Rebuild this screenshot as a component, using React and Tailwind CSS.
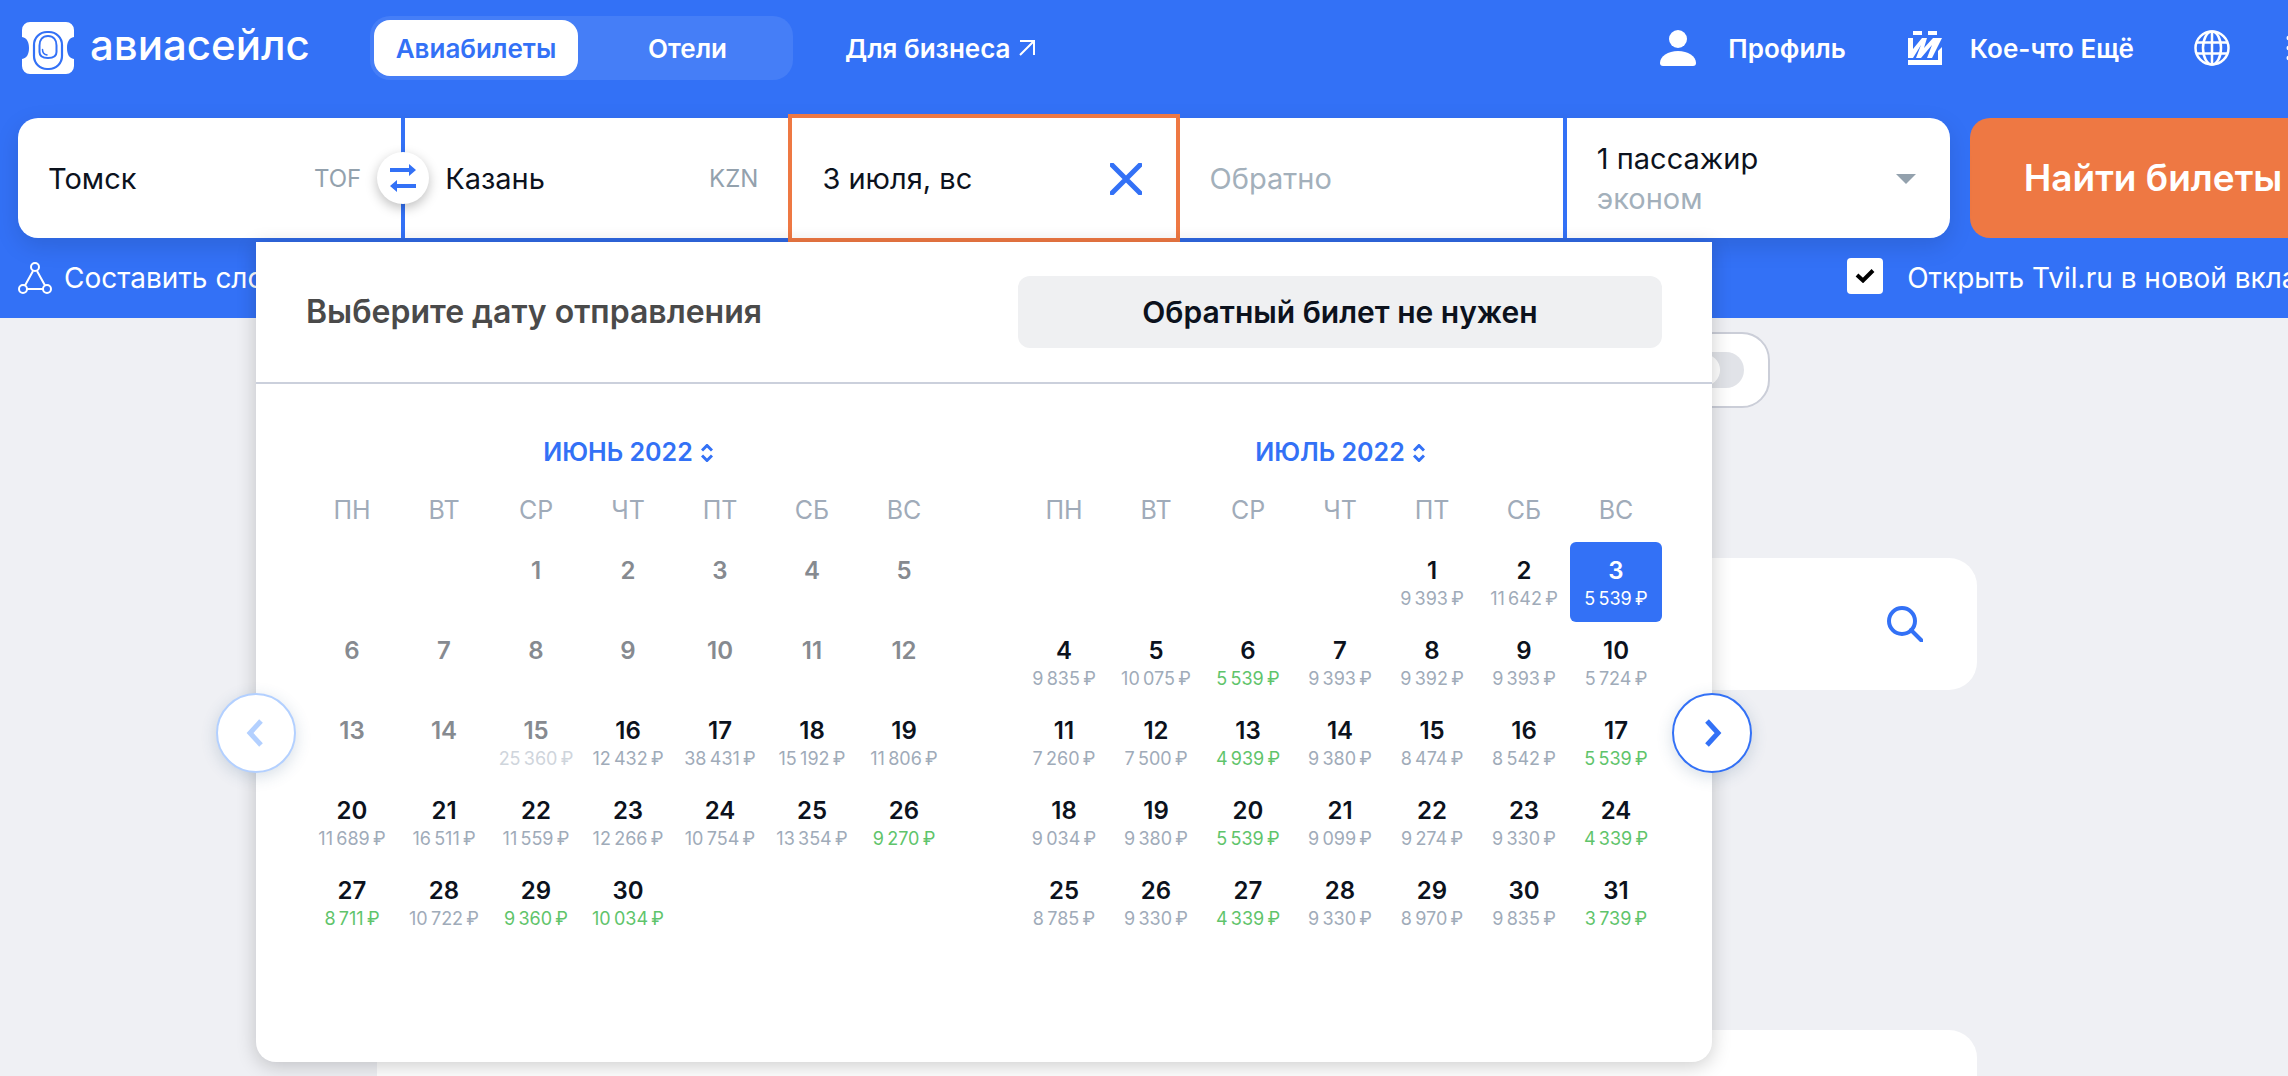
import { useState } from 'react';
import clsx from 'clsx';

const weekdays = ['ПН', 'ВТ', 'СР', 'ЧТ', 'ПТ', 'СБ', 'ВС'];

// offset - how many cells are empty before the 1st
const june = {
  title: 'ИЮНЬ 2022',
  offset: 2,
  days: 30,
  pastUntil: 15,
  prices: {
    15: 25360, 16: 12432, 17: 38431, 18: 15192, 19: 11806,
    20: 11689, 21: 16511, 22: 11559, 23: 12266, 24: 10754, 25: 13354, 26: 9270,
    27: 8711, 28: 10722, 29: 9360, 30: 10034
  },
  cheap: [26, 27, 29, 30]
};

const july = {
  title: 'ИЮЛЬ 2022',
  offset: 4,
  days: 31,
  pastUntil: 0,
  prices: {
    1: 9393, 2: 11642, 3: 5539,
    4: 9835, 5: 10075, 6: 5539, 7: 9393, 8: 9392, 9: 9393, 10: 5724,
    11: 7260, 12: 7500, 13: 4939, 14: 9380, 15: 8474, 16: 8542, 17: 5539,
    18: 9034, 19: 9380, 20: 5539, 21: 9099, 22: 9274, 23: 9330, 24: 4339,
    25: 8785, 26: 9330, 27: 4339, 28: 9330, 29: 8970, 30: 9835, 31: 3739
  },
  cheap: [6, 13, 17, 20, 24, 27, 31]
};

function formatPrice(value) {
  const thousands = Math.floor(value / 1000);
  const rest = String(value % 1000).padStart(3, '0');
  return `${thousands}\u2009${rest}\u2009₽`;
}

function getWeeks({ offset, days }) {
  const cells = [...Array(offset).fill(null), ...Array.from({ length: days }, (_, i) => i + 1)];
  while (cells.length % 7) cells.push(null);
  const weeks = [];
  for (let i = 0; i < cells.length; i += 7) weeks.push(cells.slice(i, i + 7));
  return weeks;
}

function Logo() {
  return (
    <svg className="w-[52px] h-[52px]" viewBox="0 0 52 52" fill="none">
      <path
        d="M8 0h36a8 8 0 0 1 8 8v7c-5 1-7 5-7 11s2 10 7 11v7a8 8 0 0 1-8 8H8a8 8 0 0 1-8-8v-7c5-1 7-5 7-11s-2-10-7-11V8a8 8 0 0 1 8-8Z"
        fill="#fff"
      />
      <rect x="12" y="10" width="28" height="37" rx="13" stroke="#3371f6" strokeWidth="2.200" />
      <path
        d="M26 14c5.500 0 8.500 4 8.500 9.500V30c0 4-2.500 6-8.500 6s-8.500-2-8.500-6v-6.500c0-5.500 3-9.500 8.500-9.500Z"
        stroke="#3371f6"
        strokeWidth="2"
      />
      <path d="M20.500 27.500c0 3 1.500 5 4.500 5.500" stroke="#3371f6" strokeWidth="1.500" strokeLinecap="round" />
    </svg>
  );
}

function MonthCalendar({ month, selected, onSelect }) {
  return (
    <div className="w-[644px]">
      <button className="mx-auto flex items-center gap-2 h-[58px] text-[25px] font-semibold text-[#3371f6]">
        {month.title}
        <svg className="w-3 h-[18px]" viewBox="0 0 12 18" fill="none" stroke="currentColor" strokeWidth="3">
          <path d="m1 6.500 5-5 5 5M1 11.500l5 5 5-5" />
        </svg>
      </button>
      <table className="w-full table-fixed border-collapse">
        <thead>
          <tr className="h-[58px]">
            {weekdays.map((day) => (
              <th key={day} className="p-0 align-middle text-[25px] font-normal text-[#a0abb9]">{day}</th>
            ))}
          </tr>
          <tr aria-hidden="true"><td className="h-[2px] p-0" colSpan={7} /></tr>
        </thead>
        <tbody>
          {getWeeks(month).map((week, i) => (
            <tr key={i} className="h-20">
              {week.map((day, j) => (
                <td key={j} className="p-0">
                  {day && (
                    <button
                      disabled={day <= month.pastUntil}
                      onClick={() => onSelect(day)}
                      className={clsx(
                        'flex flex-col items-center w-full h-20 pt-[14px] rounded-md whitespace-nowrap',
                        selected === day && 'bg-[#3371f6] text-white',
                        selected !== day && (day <= month.pastUntil ? 'text-[#868a90]' : 'text-[#0c121d]')
                      )}
                    >
                      <span className="text-[24px] leading-[30px] font-semibold">{day}</span>
                      {month.prices[day] && (
                        <span
                          className={clsx(
                            'text-[18px] leading-[26px]',
                            selected === day && 'text-white',
                            selected !== day && day <= month.pastUntil && 'text-[#cfd5dc]',
                            selected !== day && day > month.pastUntil &&
                              (month.cheap.includes(day) ? 'text-[#5fc46b]' : 'text-[#a0abb9]')
                          )}
                        >
                          {formatPrice(month.prices[day])}
                        </span>
                      )}
                    </button>
                  )}
                </td>
              ))}
            </tr>
          ))}
        </tbody>
      </table>
    </div>
  );
}

function DatePicker({ selected, onSelect }) {
  return (
    <div className="absolute top-[124px] left-1/2 -translate-x-1/2 z-20 w-[1456px] bg-white rounded-b-[20px] shadow-[0_4px_20px_rgba(0,0,0,0.2)]">
      <div className="flex items-center justify-between h-[142px] px-[50px] border-b-2 border-[#cbd0dc]">
        <h2 className="text-[32px] font-semibold text-[#4a4a4a]">Выберите дату отправления</h2>
        <button className="w-[644px] h-[72px] rounded-xl bg-[#eff0f2] text-[30px] font-semibold text-[#0c121d]">
          Обратный билет не нужен
        </button>
      </div>
      <div className="flex justify-between px-[50px] pt-10 pb-[120px]">
        <MonthCalendar month={june} />
        <MonthCalendar month={july} selected={selected} onSelect={onSelect} />
      </div>
      <button
        disabled
        aria-label="Предыдущий месяц"
        className="absolute top-[451px] -left-10 flex items-center justify-center w-20 h-20 rounded-full border-2 border-[#b3d0ff] bg-white text-[#b3d0ff] shadow-[0_4px_16px_rgba(50,90,130,0.2)]"
      >
        <svg className="w-5 h-7" viewBox="0 0 20 28" fill="none" stroke="currentColor" strokeWidth="5">
          <path d="M15 2 4 14l11 12" />
        </svg>
      </button>
      <button
        aria-label="Следующий месяц"
        className="absolute top-[451px] -right-10 flex items-center justify-center w-20 h-20 rounded-full border-2 border-[#3371f6] bg-white text-[#3371f6] shadow-[0_4px_16px_rgba(50,90,130,0.2)]"
      >
        <svg className="w-5 h-7" viewBox="0 0 20 28" fill="none" stroke="currentColor" strokeWidth="5">
          <path d="m5 2 11 12L5 26" />
        </svg>
      </button>
    </div>
  );
}

function Header() {
  return (
    <header className="flex items-center h-24 pl-[22px] pr-8 text-[26px] font-semibold">
      <a href="#" className="flex items-center gap-4">
        <Logo />
        <span className="w-[216px] pb-[6px] text-[42px] leading-[52px] font-medium">авиасейлс</span>
      </a>
      <nav className="flex items-center ml-16">
        <div className="flex gap-2 w-[423px] h-16 p-1 rounded-[20px] bg-[#457ef7]">
          <a href="#" className="flex items-center justify-center w-[204px] rounded-2xl bg-white text-[#3371f6]">Авиабилеты</a>
          <a href="#" className="flex items-center justify-center flex-1">Отели</a>
        </div>
        <a href="#" className="flex items-center gap-2 ml-[52px] whitespace-nowrap">
          Для бизнеса
          <svg className="w-4 h-4" viewBox="0 0 16 16" fill="none" stroke="#fff" strokeWidth="2">
            <path d="M1 1h14v14M15 1 1 15" />
          </svg>
        </a>
      </nav>
      <div className="flex items-center ml-auto whitespace-nowrap">
        <a href="#" className="flex items-center gap-8">
          <svg className="w-9 h-9" viewBox="0 0 36 36" fill="#fff">
            <circle cx="18" cy="9" r="9" />
            <path d="M0 33c0-7 8-12 18-12s18 5 18 12c0 2-1 3-3 3H3c-2 0-3-1-3-3Z" />
          </svg>
          Профиль
        </a>
        <a href="#" className="flex items-center gap-7 ml-[62px]">
          <svg className="w-[34px] h-[34px]" viewBox="0 0 34 34" fill="#fff">
            <path d="M5 0h9v4H5zM20 0h9v4h-9zM0 29h30V20l4-4v18H0z" />
            <path d="M0 7h5v11L14 7h5l-3 10 9-10h9L24 27h-5l5-13-11 13H8l5-13L5 27H0z" />
          </svg>
          Кое-что Ещё
        </a>
        <button aria-label="Язык" className="ml-15">
          <svg className="w-9 h-9" viewBox="0 0 36 36" fill="none" stroke="#fff" strokeWidth="2.500">
            <circle cx="18" cy="18" r="16.500" />
            <ellipse cx="18" cy="18" rx="9" ry="16.500" />
            <path d="M18 1v34M3 12.500h30M3 23.500h30" />
          </svg>
        </button>
        <button aria-label="Меню" className="ml-14">
          <svg className="w-9 h-9" viewBox="0 0 36 36" stroke="#fff" strokeWidth="5" strokeLinecap="round">
            <path d="M3 8h30M3 18h30M3 28h30" />
          </svg>
        </button>
      </div>
    </header>
  );
}

function SearchForm({ selected, onSelect }) {
  const [newTab, setNewTab] = useState(true);

  return (
    <form onSubmit={(e) => e.preventDefault()} className="pt-[22px]">
      <div className="flex gap-5 px-[18px]">
        <div className="relative flex-1 grid grid-cols-5 gap-1 h-[120px] rounded-[20px] text-[29px] text-[#0c121d] shadow-[0_8px_24px_rgba(0,0,0,0.12)]">
          <label className="flex items-center pl-[30px] pr-10 pt-[2px] bg-white rounded-l-[20px]">
            <input aria-label="Откуда" defaultValue="Томск" className="flex-1 min-w-0 outline-none" />
            <span className="text-[24px] text-[#93a1ad]">TOF</span>
          </label>
          <label className="relative flex items-center pl-10 pr-[30px] pt-[2px] bg-white">
            <input aria-label="Куда" defaultValue="Казань" className="flex-1 min-w-0 outline-none" />
            <span className="text-[24px] text-[#93a1ad]">KZN</span>
            <button
              type="button"
              aria-label="Поменять местами"
              className="absolute -left-7 top-[34px] flex items-center justify-center w-[52px] h-[52px] rounded-full bg-white shadow-[0_4px_12px_rgba(0,0,0,0.25)]"
            >
              <svg className="w-7 h-7" viewBox="0 0 28 28" fill="#3371f6">
                <path d="M1 4h19V0l7 6-7 6V8H1zM27 20H8v-4l-7 6 7 6v-4h19z" />
              </svg>
            </button>
          </label>
          <label className="z-10 flex items-center pl-[30px] pr-[34px] pt-[2px] bg-white ring-4 ring-[#ee7843]">
            <input aria-label="Туда" readOnly value={`${selected} июля, вс`} className="flex-1 min-w-0 outline-none" />
            <button type="button" aria-label="Очистить">
              <svg className="w-8 h-8" viewBox="0 0 32 32" fill="none" stroke="#3371f6" strokeWidth="5" strokeLinecap="round">
                <path d="m2 2 28 28M30 2 2 30" />
              </svg>
            </button>
          </label>
          <label className="flex items-center px-[30px] pt-[2px] bg-white">
            <input aria-label="Обратно" placeholder="Обратно" className="w-full outline-none placeholder:text-[#a3b0bb]" />
          </label>
          <button type="button" className="flex items-center justify-between pl-[30px] pr-[34px] pt-[2px] bg-white rounded-r-[20px] text-left">
            <span className="leading-10">
              <span className="block">1 пассажир</span>
              <span className="block text-[#a3b0bb]">эконом</span>
            </span>
            <svg className="w-5 h-[10px]" viewBox="0 0 20 10" fill="#93a1ad">
              <path d="M0 0h20L10 10z" />
            </svg>
          </button>
          <DatePicker selected={selected} onSelect={onSelect} />
        </div>
        <button type="submit" className="w-[366px] rounded-[20px] bg-[#ee7843] text-[37px] font-semibold">
          Найти билеты
        </button>
      </div>
      <div className="flex items-center justify-between h-20 pl-[18px] pr-2 text-[28px] whitespace-nowrap">
        <a href="#" className="flex items-center gap-3">
          <svg className="w-[34px] h-8" viewBox="0 0 34 32" fill="none" stroke="#fff" strokeWidth="2">
            <circle cx="17" cy="5" r="4" />
            <circle cx="5" cy="27" r="4" />
            <circle cx="29" cy="27" r="4" />
            <path d="M15 9 7 23.500M19 9l8 14.500M9 27h16" />
          </svg>
          Составить сложный маршрут
        </a>
        <label className="flex items-center gap-6">
          <span className="relative flex items-center justify-center w-9 h-9 -mt-1">
            <input
              type="checkbox"
              checked={newTab}
              onChange={(e) => setNewTab(e.target.checked)}
              className="w-9 h-9 appearance-none rounded-sm bg-white"
            />
            {newTab && (
              <svg className="absolute w-5 h-[14px] pointer-events-none" viewBox="0 0 20 14" fill="none" stroke="#000" strokeWidth="4">
                <path d="m2 6 6 5.500L18 1.500" />
              </svg>
            )}
          </span>
          Открыть Tvil.ru в новой вкладке
        </label>
      </div>
    </form>
  );
}

export default function App() {
  const [selected, setSelected] = useState(3);

  return (
    <div className="overflow-hidden h-screen bg-[#eff0f4] font-['Inter',sans-serif]">
      <div className="flex flex-col w-[calc(100%+66px)] h-full">
        <div className="relative z-10 bg-[#3371f6] text-white">
          <Header />
          <SearchForm selected={selected} onSelect={setSelected} />
        </div>

        <main className="flex flex-col flex-1 w-full max-w-[1600px] mx-auto pt-[14px]">
          <div className="flex justify-end pr-[207px]">
            <label className="flex items-center justify-end w-80 h-[76px] pr-6 rounded-[28px] border-2 border-[#cbced8] bg-white">
              <span className="relative flex">
                <input
                  type="checkbox"
                  role="switch"
                  aria-label="Показать график цен"
                  className="peer w-[60px] h-9 appearance-none rounded-full bg-[#e1e3e8]"
                />
                <span className="absolute top-[2px] left-1 w-8 h-8 rounded-full bg-white peer-checked:left-6" />
              </span>
            </label>
          </div>
          <div className="flex items-center justify-end h-[132px] mt-[150px] pr-[54px] rounded-[28px] bg-white">
            <button aria-label="Найти">
              <svg className="w-9 h-9" viewBox="0 0 36 36" fill="none" stroke="#3371f6" strokeWidth="4">
                <circle cx="15" cy="15" r="13" />
                <path d="m24 24 10.500 10.500" strokeLinecap="round" />
              </svg>
            </button>
          </div>
          <div className="flex-1 mt-[340px] rounded-t-[28px] bg-white" />
        </main>
      </div>
    </div>
  );
}
